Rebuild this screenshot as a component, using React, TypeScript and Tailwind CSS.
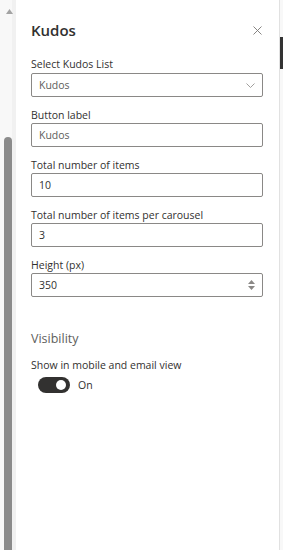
import React from 'react';

type Field = {
  label: string;
  value: string;
  muted?: boolean;
  kind?: 'select' | 'text' | 'number';
};

const fields: Field[] = [
  { label: 'Button label', value: 'Kudos', muted: true },
  { label: 'Total number of items', value: '10' },
  { label: 'Total number of items per carousel', value: '3' },
  { label: 'Height (px)', value: '350', kind: 'number' },
];

function Chevron() {
  return (
    <svg width="9" height="5" viewBox="0 0 9 5" fill="none">
      <path d="M0.5 0.5L4.5 4.5L8.5 0.5" stroke="#a19f9d" strokeWidth="1" />
    </svg>
  );
}

function Spinner() {
  return (
    <div className="flex flex-col items-center gap-[2px]">
      <svg width="7" height="4" viewBox="0 0 7 4">
        <path d="M3.5 0L7 4H0Z" fill="#8a8886" />
      </svg>
      <svg width="7" height="4" viewBox="0 0 7 4">
        <path d="M0 0H7L3.5 4Z" fill="#8a8886" />
      </svg>
    </div>
  );
}

function Box({ field }: { field: Field }) {
  return (
    <div className="flex h-[24px] items-center justify-between rounded-[2px] border border-[#8a8886] bg-white pl-[7px] pr-[7px]">
      <span
        className={`text-[10.5px] leading-none ${field.muted ? 'text-[#605e5c]' : 'text-[#323130]'}`}
      >
        {field.value}
      </span>
      {field.kind === 'select' && <Chevron />}
      {field.kind === 'number' && <Spinner />}
    </div>
  );
}

export default function App() {
  return (
    <div className="flex h-[550px] w-[283px] overflow-hidden bg-white font-['Open_Sans',sans-serif] text-[#323130]">
      {/* left scroll bar */}
      <div className="relative w-[16px] shrink-0 bg-[#f8f8f8]">
        <div className="absolute right-0 top-0 h-full w-[4px] bg-[#f1f1f1]" />
        <svg className="absolute left-[6px] top-[9px]" width="7" height="5" viewBox="0 0 7 5">
          <path d="M3.5 0L7 5H0Z" fill="#a3a3a3" />
        </svg>
        <div className="absolute bottom-0 left-[4px] top-[137px] w-[8px] rounded-t-[4px] bg-[#8b8b8b]" />
      </div>

      {/* property pane */}
      <div className="flex w-[263px] shrink-0 flex-col pl-[15px] pr-[16px] pt-[19px]">
        <div className="flex h-[22px] items-center justify-between">
          <h2 className="text-[15px] font-semibold leading-[22px] text-[#323130]">Kudos</h2>
          <svg className="mr-[1px]" width="9" height="9" viewBox="0 0 9 9">
            <path d="M0.5 0.5L8.5 8.5M8.5 0.5L0.5 8.5" stroke="#797775" strokeWidth="0.9" />
          </svg>
        </div>

        <label className="mt-[15px] block h-[17px] text-[10.5px] leading-[16px]">Select Kudos List</label>
        <Box field={{ label: 'Select Kudos List', value: 'Kudos', muted: true, kind: 'select' }} />

        {fields.map((f) => (
          <div key={f.label} className="mt-[10px]">
            <label className="block h-[16px] text-[10.5px] leading-[16px]">{f.label}</label>
            <Box field={f} />
          </div>
        ))}

        <div className="mt-[34px] text-[12.5px] leading-[16px] text-[#605e5c]">Visibility</div>
        <div className="mt-[10px] text-[10.5px] leading-[16px]">Show in mobile and email view</div>
        <div className="ml-[7px] mt-[4px] flex items-center gap-[8px]">
          <div className="flex h-[16px] w-[32px] items-center justify-end rounded-full bg-[#323130] pr-[4px]">
            <div className="h-[10px] w-[10px] rounded-full bg-white" />
          </div>
          <span className="text-[10.5px] leading-[16px]">On</span>
        </div>
      </div>

      {/* right edge */}
      <div className="w-[1px] shrink-0 bg-[#e1e1e1]" />
      <div className="relative w-[3px] shrink-0 bg-[#f8f8f8]">
        <div className="absolute left-0 top-[37px] h-[32px] w-[3px] bg-[#333333]" />
      </div>
    </div>
  );
}
